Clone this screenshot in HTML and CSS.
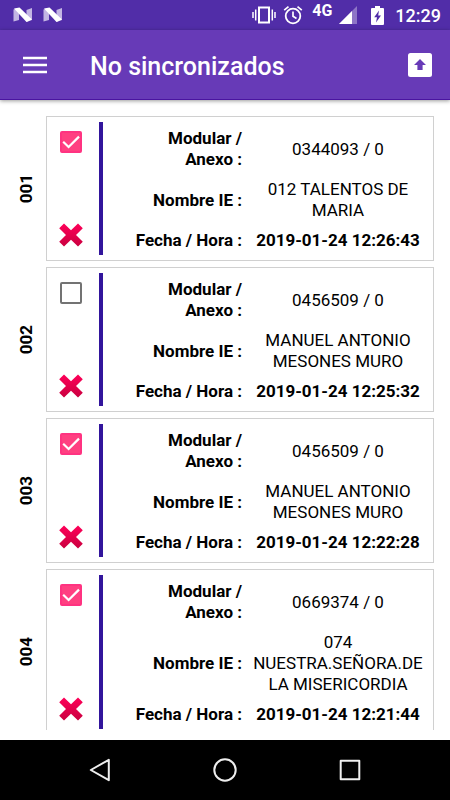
FILE: index.html
```html
<!DOCTYPE html>
<html lang="es">
<head>
<meta charset="utf-8">
<meta name="viewport" content="width=device-width, initial-scale=1">
<title>No sincronizados</title>
<link rel="stylesheet" href="styles.css">
</head>
<body>
<svg class="defs" aria-hidden="true">
  <defs>
    <linearGradient id="cross-fill" x1="0" y1="0" x2="0" y2="1">
      <stop offset="0" stop-color="#ff0059"/>
      <stop offset="1" stop-color="#c9003f"/>
    </linearGradient>
    <symbol id="cross" viewBox="0 0 24 24">
      <path fill="url(#cross-fill)" d="M5 0.5 12 7.2 19 0.5 23.8 5.2 17 12 23.8 18.8 19 23.5 12 16.8 5 23.5 0.2 18.8 7 12 0.2 5.2Z"/>
    </symbol>
    <symbol id="tick" viewBox="0 0 22 22">
      <path fill="none" stroke="#fff" stroke-width="2.2" d="M3.2 10.8 8.6 16 19 5.6"/>
    </symbol>
    <symbol id="n-logo" viewBox="0 0 20 16">
      <path fill="#c3b5e3" d="M0.5 2.5 6 1V13L0.5 14.5ZM13.5 3 19 1V13L13.5 15Z"/>
      <path fill="#fff" d="M1 1.5 6.5 0.5 19 12.5 13.5 15Z"/>
    </symbol>
  </defs>
</svg>

<div class="status">
  <svg class="n-logo" aria-hidden="true"><use href="#n-logo"/></svg>
  <svg class="n-logo" aria-hidden="true"><use href="#n-logo"/></svg>
  <span class="spacer"></span>
  <svg class="vibrate" viewBox="0 0 24 18" aria-hidden="true">
    <path fill="none" stroke="#fff" stroke-width="2" d="M7 1.5H17V16.5H7Z"/>
    <path fill="none" stroke="#fff" stroke-width="1.5" d="M3.7 3.5V14.5M1 6V12M20.3 3.5V14.5M23 6V12"/>
  </svg>
  <svg class="alarm" viewBox="0 0 20 20" aria-hidden="true">
    <circle cx="10" cy="11" r="7.3" fill="none" stroke="#fff" stroke-width="1.8"/>
    <path fill="none" stroke="#fff" stroke-width="1.7" d="M10 6.5V11.2L13.5 13.5M1.2 5.2 5.5 1.6M18.8 5.2 14.5 1.6"/>
  </svg>
  <span class="network">4G</span>
  <svg class="signal" viewBox="0 0 18 18" aria-hidden="true">
    <path fill="#8d75c6" d="M18 0V18H0Z"/>
    <path fill="#fff" d="M13 5V18H0Z"/>
  </svg>
  <svg class="battery" viewBox="0 0 13 19" aria-hidden="true">
    <path fill="#fff" d="M4 0H9V2H12Q13 2 13 3V18Q13 19 12 19H1Q0 19 0 18V3Q0 2 1 2H4Z"/>
    <path fill="#512da8" d="M8 4.5 3.2 11.2H6L5 16.5 10 9.6H7.2Z"/>
  </svg>
  <time class="clock">12:29</time>
</div>

<header class="appbar">
  <button class="icon-button" type="button" aria-label="Menú">
    <svg class="menu-icon" viewBox="0 0 24 18" aria-hidden="true">
      <path stroke="#fff" stroke-width="2.4" d="M0 2H24M0 9H24M0 16H24"/>
    </svg>
  </button>
  <h1 class="title">No sincronizados</h1>
  <button class="icon-button" type="button" aria-label="Sincronizar">
    <svg class="upload-icon" viewBox="0 0 24 24" aria-hidden="true">
      <rect width="24" height="24" rx="2.5" fill="#fff"/>
      <path fill="#673ab7" d="M12 6 18 12H14.6V17H9.4V12H6Z"/>
    </svg>
  </button>
</header>

<main class="list">
  <article class="row">
    <span class="index">001</span>
    <div class="card">
      <div class="actions">
        <label class="check"><input type="checkbox" aria-label="Seleccionar 001" checked><svg aria-hidden="true"><use href="#tick"/></svg></label>
        <button class="delete" type="button" aria-label="Eliminar 001"><svg aria-hidden="true"><use href="#cross"/></svg></button>
      </div>
      <dl class="info">
        <dt>Modular / Anexo&nbsp;:</dt><dd>0344093 / 0</dd>
        <dt>Nombre IE :</dt><dd>012 TALENTOS DE MARIA</dd>
        <dt>Fecha / Hora :</dt><dd class="date">2019-01-24 12:26:43</dd>
      </dl>
    </div>
  </article>
  <article class="row">
    <span class="index">002</span>
    <div class="card">
      <div class="actions">
        <label class="check"><input type="checkbox" aria-label="Seleccionar 002"><svg aria-hidden="true"><use href="#tick"/></svg></label>
        <button class="delete" type="button" aria-label="Eliminar 002"><svg aria-hidden="true"><use href="#cross"/></svg></button>
      </div>
      <dl class="info">
        <dt>Modular / Anexo&nbsp;:</dt><dd>0456509 / 0</dd>
        <dt>Nombre IE :</dt><dd>MANUEL ANTONIO MESONES MURO</dd>
        <dt>Fecha / Hora :</dt><dd class="date">2019-01-24 12:25:32</dd>
      </dl>
    </div>
  </article>
  <article class="row">
    <span class="index">003</span>
    <div class="card">
      <div class="actions">
        <label class="check"><input type="checkbox" aria-label="Seleccionar 003" checked><svg aria-hidden="true"><use href="#tick"/></svg></label>
        <button class="delete" type="button" aria-label="Eliminar 003"><svg aria-hidden="true"><use href="#cross"/></svg></button>
      </div>
      <dl class="info">
        <dt>Modular / Anexo&nbsp;:</dt><dd>0456509 / 0</dd>
        <dt>Nombre IE :</dt><dd>MANUEL ANTONIO MESONES MURO</dd>
        <dt>Fecha / Hora :</dt><dd class="date">2019-01-24 12:22:28</dd>
      </dl>
    </div>
  </article>
  <article class="row">
    <span class="index">004</span>
    <div class="card">
      <div class="actions">
        <label class="check"><input type="checkbox" aria-label="Seleccionar 004" checked><svg aria-hidden="true"><use href="#tick"/></svg></label>
        <button class="delete" type="button" aria-label="Eliminar 004"><svg aria-hidden="true"><use href="#cross"/></svg></button>
      </div>
      <dl class="info">
        <dt>Modular / Anexo&nbsp;:</dt><dd>0669374 / 0</dd>
        <dt>Nombre IE :</dt><dd>074 NUESTRA.SEÑORA.DE LA MISERICORDIA</dd>
        <dt>Fecha / Hora :</dt><dd class="date">2019-01-24 12:21:44</dd>
      </dl>
    </div>
  </article>
</main>

<nav class="navbar" aria-label="Sistema">
  <button type="button" aria-label="Atrás">
    <svg viewBox="0 0 24 24" aria-hidden="true"><path d="M20.8 1.8V22.2L2.8 12Z"/></svg>
  </button>
  <button type="button" aria-label="Inicio">
    <svg viewBox="0 0 24 24" aria-hidden="true"><circle cx="12" cy="12" r="10.7"/></svg>
  </button>
  <button type="button" aria-label="Recientes">
    <svg viewBox="0 0 24 24" aria-hidden="true"><rect x="2.7" y="2.7" width="18.6" height="18.6"/></svg>
  </button>
</nav>
</body>
</html>
```
FILE: styles.css
```css
* {
  box-sizing: border-box;
}

body {
  margin: 0;
  height: 100vh;
  display: flex;
  flex-direction: column;
  background: #fff;
  color: #000;
  font: 17px/21px Roboto, "Liberation Sans", sans-serif;
}

button {
  padding: 0;
  border: 0;
  background: none;
  cursor: pointer;
}

svg {
  display: block;
}

.defs {
  position: absolute;
  width: 0;
  height: 0;
}

/* Status bar */
.status {
  flex: none;
  display: flex;
  align-items: center;
  height: 30px;
  padding: 0 9px 0 13px;
  background: #512da8;
  color: #fff;
}

.n-logo {
  width: 20px;
  height: 16px;
  margin-right: 10px;
}

.spacer {
  flex: 1;
}

.vibrate {
  width: 24px;
  height: 18px;
}

.alarm {
  width: 20px;
  height: 20px;
  margin-left: 7px;
}

.network {
  align-self: flex-start;
  margin: 0 7px 0 9px;
  font-size: 16px;
  font-weight: 700;
}

.signal {
  width: 18px;
  height: 18px;
}

.battery {
  width: 13px;
  height: 19px;
  margin: 0 11px 0 14px;
}

.clock {
  font-size: 18px;
  font-weight: 500;
}

/* App bar */
.appbar {
  flex: none;
  z-index: 1;
  display: flex;
  align-items: center;
  height: 70px;
  padding: 0 18px 0 23px;
  border-bottom: 1px solid #4a14a0;
  background: #673ab7;
  color: #fff;
  box-shadow: 0 1px 4px rgba(0, 0, 0, 0.4);
}

.icon-button {
  width: 24px;
  height: 24px;
  display: grid;
  place-items: center;
}

.menu-icon {
  width: 24px;
  height: 18px;
}

.upload-icon {
  width: 24px;
  height: 24px;
}

.title {
  flex: 1;
  margin: 0 0 0 43px;
  padding-top: 4px;
  font-size: 25px;
  line-height: 30px;
  font-weight: 500;
}

/* Record list */
.list {
  flex: 1;
  min-height: 0;
  margin-bottom: 10px;
  padding: 16px 16px 0 6px;
  display: flex;
  flex-direction: column;
  gap: 6px;
  overflow-y: auto;
  scrollbar-width: none;
}

.row {
  flex: none;
  display: flex;
  align-items: center;
}

.index {
  width: 40px;
  display: flex;
  align-items: center;
  justify-content: center;
  writing-mode: vertical-rl;
  transform: rotate(180deg);
  font-weight: 700;
}

.card {
  flex: 1;
  display: flex;
  padding: 5px;
  border: 1px solid #d0d0d0;
}

.actions {
  width: 51px;
  display: flex;
  flex-direction: column;
  align-items: flex-start;
  justify-content: space-between;
  padding: 9px 0 8px 7px;
  border-right: 4px solid #32159c;
}

.check {
  display: grid;
  margin-left: 1px;
}

.check input,
.check svg {
  grid-area: 1 / 1;
  width: 22px;
  height: 22px;
  margin: 0;
}

.check input {
  appearance: none;
  border: 2px solid #737373;
  border-radius: 2px;
}

.check input:checked {
  border-color: #ff3381;
  background: #ff4081;
}

.check svg {
  visibility: hidden;
  pointer-events: none;
}

.check input:checked + svg {
  visibility: visible;
}

.delete,
.delete svg {
  width: 24px;
  height: 24px;
}

.info {
  flex: 1;
  display: grid;
  grid-template-columns: 11fr 15fr;
  gap: 9px 6px;
  align-items: center;
  margin: 0;
  padding: 6px 0 4px 7px;
}

.info dt {
  font-weight: 700;
  text-align: right;
}

.info dd {
  margin: 0;
  text-align: center;
}

.info .date {
  font-weight: 700;
}

/* System navigation */
.navbar {
  flex: none;
  display: flex;
  align-items: center;
  justify-content: center;
  gap: 101px;
  height: 60px;
  background: #000;
}

.navbar svg {
  width: 24px;
  height: 24px;
  fill: none;
  stroke: #eee;
  stroke-width: 2;
  stroke-linejoin: round;
}
```
